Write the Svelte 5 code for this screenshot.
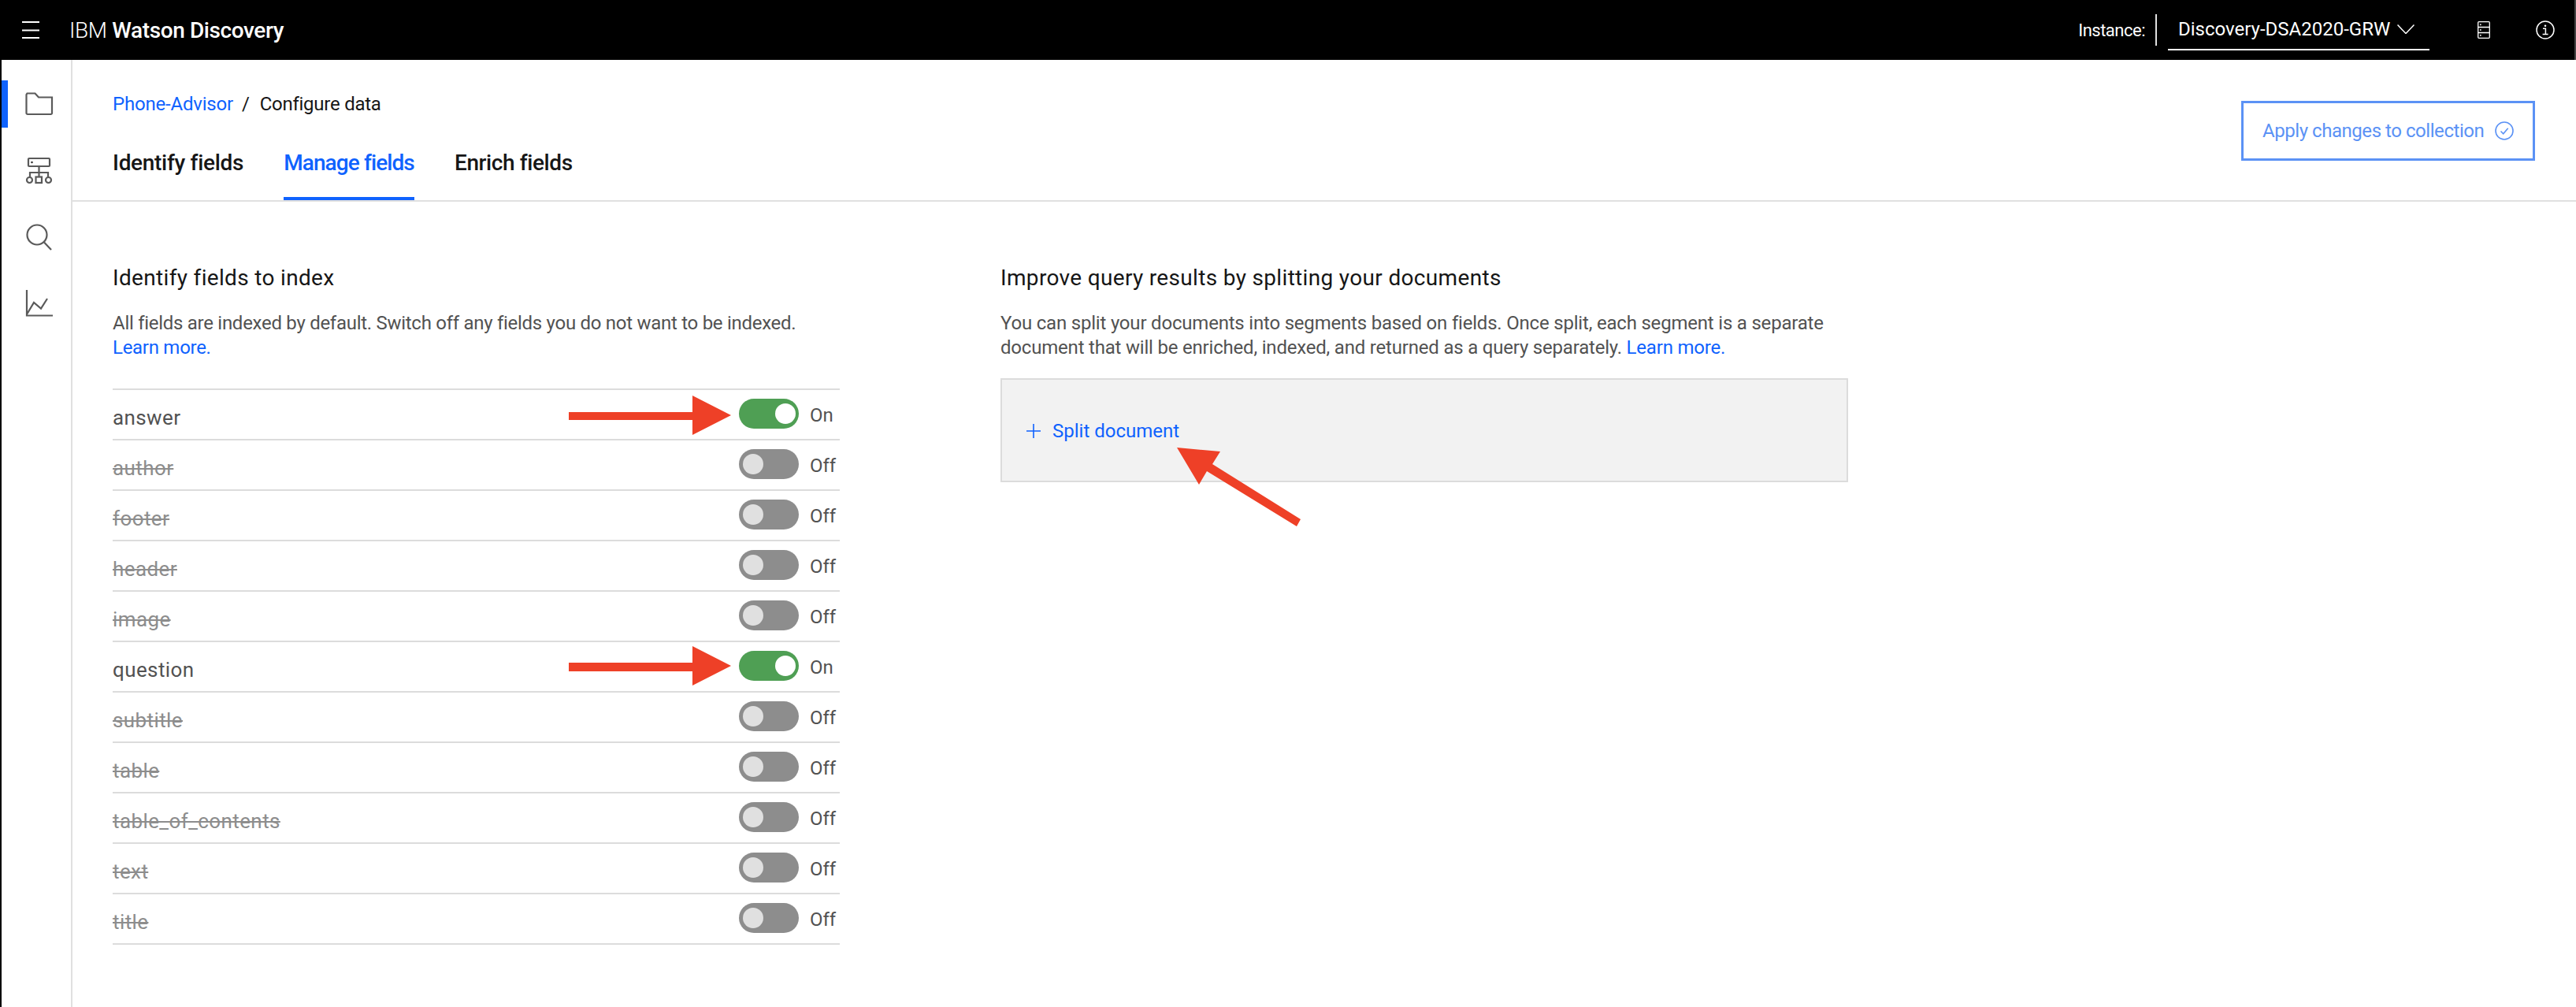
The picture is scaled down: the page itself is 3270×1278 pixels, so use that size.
<script>
  const fields = [
    ['answer', true],
    ['author', false],
    ['footer', false],
    ['header', false],
    ['image', false],
    ['question', true],
    ['subtitle', false],
    ['table', false],
    ['table_of_contents', false],
    ['text', false],
    ['title', false]
  ];
</script>

<div class="page">
  <header class="topbar">
    <svg class="menu" width="22" height="22" viewBox="0 0 22 22"><path d="M0 1h22M0 11.5h22M0 21h22" stroke="#fff" stroke-width="2" fill="none"/></svg>
    <div class="brand"><span class="ibm">IBM</span> <b>Watson Discovery</b></div>
    <div class="instance-label">Instance:</div>
    <div class="sep"></div>
    <div class="select">
      <span>Discovery-DSA2020-GRW</span>
      <svg width="22" height="12" viewBox="0 0 22 12"><path d="M0.5 0.5L11 11.5L21.5 0.5" stroke="#fff" stroke-width="1.5" fill="none"/></svg>
    </div>
    <svg class="db" width="16" height="22" viewBox="0 0 16 22"><g fill="none" stroke="#fff" stroke-width="1.3"><rect x=".7" y=".7" width="14.6" height="20.6" rx="1"/><path d="M1 7.5h14M1 14.5h14"/></g><g fill="#fff"><rect x="3" y="3.5" width="1.6" height="1.6"/><rect x="3" y="10.2" width="1.6" height="1.6"/><rect x="3" y="17" width="1.6" height="1.6"/></g></svg>
    <svg class="info" width="24" height="24" viewBox="0 0 24 24"><circle cx="12" cy="12" r="11" fill="none" stroke="#fff" stroke-width="1.5"/><path d="M9 10.2h3.4v7M8.6 17.4h7" fill="none" stroke="#fff" stroke-width="1.5"/><circle cx="12" cy="6.8" r="1.3" fill="#fff"/></svg>
  </header>

  <div class="shell">
    <nav class="rail">
      <div class="rail-item active">
        <svg width="36" height="30" viewBox="0 0 36 30"><path d="M2.500 1.500h10l4.500 5h17v20a1.500 1.500 0 0 1-1.500 1.500H3a1.500 1.500 0 0 1-1.500-1.500V3z" fill="none" stroke="#5a5a5a" stroke-width="2.200"/></svg>
      </div>
      <div class="rail-item">
        <svg width="36" height="36" viewBox="0 -1 36 36"><g fill="none" stroke="#5a5a5a" stroke-width="2.200"><rect x="4" y="2" width="27" height="10" rx="1"/><path d="M17.500 12v14M6 26v-6h23v6"/><circle cx="5.500" cy="29.500" r="3.500"/><rect x="13.500" y="25.500" width="7.500" height="7.500"/><circle cx="29.500" cy="29.500" r="3.500"/></g><circle cx="8.500" cy="7" r="1.300" fill="#333"/></svg>
      </div>
      <div class="rail-item">
        <svg width="36" height="36" viewBox="0 -1 36 36"><g fill="none" stroke="#5a5a5a" stroke-width="2.200"><circle cx="15" cy="15" r="12.500"/><path d="M24 24.500L33 34"/></g></svg>
      </div>
      <div class="rail-item">
        <svg width="36" height="36" viewBox="0 -1 36 36"><path d="M2 1v32.500h33M2 32L11 17l9 7.500L28 12" fill="none" stroke="#5a5a5a" stroke-width="2.200"/></svg>
      </div>
    </nav>

    <main class="main">
      <div class="page-head">
        <div class="head-left">
          <div class="crumbs"><a>Phone-Advisor</a><span class="slash">/</span><span class="here">Configure data</span></div>
          <div class="tabs">
            <div class="tab first">Identify fields</div>
            <div class="tab current">Manage fields</div>
            <div class="tab">Enrich fields</div>
          </div>
        </div>
        <div class="apply">
          <span>Apply changes to collection</span>
          <svg width="24" height="24" viewBox="0 0 24 24"><circle cx="12" cy="12" r="11" fill="none" stroke="#5b92f5" stroke-width="1.600"/><path d="M7.500 12.500l3.200 3.200 6-7" fill="none" stroke="#5b92f5" stroke-width="1.600"/></svg>
        </div>
      </div>

      <div class="columns">
        <section class="left">
          <h2>Identify fields to index</h2>
          <p>All fields are indexed by default. Switch off any fields you do not want to be indexed. <a>Learn more.</a></p>
          <div class="rows">
            {#each fields as [name, on]}
              <div class="row">
                <span class="name" class:off={!on}>{name}</span>
                <div class="switch" class:on><i></i></div>
                <span class="state">{on ? 'On' : 'Off'}</span>
              </div>
            {/each}
          </div>
        </section>
        <section class="right">
          <h2>Improve query results by splitting your documents</h2>
          <p>You can split your documents into segments based on fields. Once split, each segment is a separate document that will be enriched, indexed, and returned as a query separately. <a>Learn more.</a></p>
          <div class="panel">
            <svg width="18" height="18" viewBox="0 0 18 18"><path d="M9 0v18M0 9h18" stroke="#0f62fe" stroke-width="1.600"/></svg>
            <a>Split document</a>
          </div>
        </section>
      </div>
    </main>
  </div>

  <svg class="arrows" width="3270" height="1278" viewBox="0 0 3270 1278">
    <g fill="#ee4027">
      <polygon points="722,523 879,523 879,502 928,527 879,552 879,533 722,533"/>
      <polygon points="722,841 879,841 879,820 928,845 879,870 879,852 722,852"/>
      <polygon points="1494,568 1549,573 1539,589 1651,659 1646,668 1532,598 1522,615"/>
    </g>
  </svg>
</div>

<style>
  :global(body) { margin: 0; background: #fff; }
  .page {
    position: relative;
    width: 3270px;
    height: 1278px;
    overflow: hidden;
    box-sizing: border-box;
    border-left: 2px solid #000;
    font-family: "Roboto", "Noto Sans", sans-serif;
    color: #161616;
    background: #fff;
  }
  a { color: #0f62fe; }

  .topbar {
    height: 76px;
    background: #000;
    color: #fff;
    display: flex;
    align-items: center;
    font-size: 24px;
    border-right: 2px solid #444;
  }
  .menu { margin-left: 26px; margin-right: 38px; }
  .brand { font-size: 28px; white-space: nowrap; flex: 1; letter-spacing: -0.4px; }
  .ibm { font-weight: 300; }
  .brand b { font-weight: 500; }
  .instance-label { margin-right: 13px; font-size: 22px; letter-spacing: -0.5px; }
  .sep { width: 2px; height: 40px; background: #e0e0e0; margin-right: 14px; }
  .select {
    width: 332px;
    height: 76px;
    box-sizing: border-box;
    padding: 0 19px 2px 13px;
    display: flex;
    align-items: center;
    justify-content: space-between;
    position: relative;
  }
  .select::after {
    content: "";
    position: absolute;
    left: 0; right: 0; top: 62px;
    height: 2px;
    background: #fff;
  }
  .db { margin-left: 61px; }
  .info { margin-left: 58px; margin-right: 25px; }

  .shell { display: flex; height: 1202px; }
  .rail {
    width: 88px;
    border-right: 2px solid #e0e0e0;
    display: flex;
    flex-direction: column;
    padding-top: 26px;
    flex: none;
  }
  .rail-item {
    height: 60px;
    margin-bottom: 24px;
    display: flex;
    align-items: center;
    justify-content: center;
    border-left: 8px solid transparent;
    box-sizing: border-box;
    width: 88px;
    padding: 0 8px;
  }
  .rail-item.active { border-left-color: #0f62fe; }

  .main { flex: 1; min-width: 0; }
  .page-head {
    height: 180px;
    box-sizing: border-box;
    border-bottom: 2px solid #e0e0e0;
    padding-left: 51px;
    display: flex;
    justify-content: space-between;
  }
  .crumbs {
    padding-top: 42px;
    font-size: 24px;
    line-height: 28px;
    display: flex;
    color: #161616;
    letter-spacing: -0.2px;
  }
  .here { letter-spacing: -0.25px; }
  .slash { margin: 0 13px 0 11px; }
  .tabs {
    margin-top: 43px;
    display: flex;
    gap: 51px;
  }
  .tab {
    font-size: 28px;
    font-weight: 500;
    height: 61px;
    line-height: 36px;
    letter-spacing: -0.4px;
    white-space: nowrap;
    flex: none;
  }
  .tab.first { width: 166px; letter-spacing: -0.3px; }
  .tab.current {
    width: 166px;
    text-align: center;
    letter-spacing: -0.9px;
    color: #0f62fe;
    border-bottom: 4px solid #0f62fe;
  }
  .apply {
    margin-top: 52px;
    margin-right: 52px;
    width: 373px;
    height: 76px;
    box-sizing: border-box;
    border: 3px solid #5b92f5;
    color: #5b92f5;
    font-size: 24px;
    letter-spacing: -0.45px;
    display: flex;
    align-items: center;
    justify-content: space-between;
    padding: 0 24px;
  }

  .columns { display: flex; padding: 79px 0 0 51px; }
  .left { width: 923px; margin-right: 204px; }
  .right { width: 1076px; }
  h2 { margin: 0; font-size: 28px; font-weight: 400; line-height: 36px; color: #161616; letter-spacing: 0.33px; }
  p { margin: 24px 0 0; font-size: 24px; line-height: 31px; color: #525252; letter-spacing: -0.2px; }
  .left p { height: 62px; letter-spacing: -0.28px; }
  .rows { margin-top: 36px; border-top: 2px solid #dcdcdc; }
  .row {
    height: 62px;
    border-bottom: 2px solid #dcdcdc;
    display: flex;
    align-items: flex-start;
    color: #525252;
  }
  .name { flex: 1; font-size: 26px; line-height: 36px; padding-top: 17px; letter-spacing: 0.4px; }
  .name.off { color: #8d8d8d; text-decoration: line-through; }
  .switch {
    width: 76px;
    height: 38px;
    border-radius: 19px;
    background: #8d8d8d;
    margin-top: 11px;
    position: relative;
  }
  .switch i {
    position: absolute;
    left: 5px; top: 6px;
    width: 26px; height: 26px;
    border-radius: 50%;
    background: #e0e0e0;
  }
  .switch.on { background: #4f9f54; }
  .switch.on i { left: 46px; background: #fff; }
  .state { width: 38px; margin-left: 14px; font-size: 24px; line-height: 28px; padding-top: 18px; }

  .panel {
    margin-top: 23px;
    height: 132px;
    box-sizing: border-box;
    border: 2px solid #dcdcdc;
    background: #f2f2f2;
    display: flex;
    align-items: center;
    padding: 2px 0 0 31px;
    gap: 15px;
    font-size: 24px;
  }

  .arrows { position: absolute; left: -2px; top: 0; pointer-events: none; }
</style>
